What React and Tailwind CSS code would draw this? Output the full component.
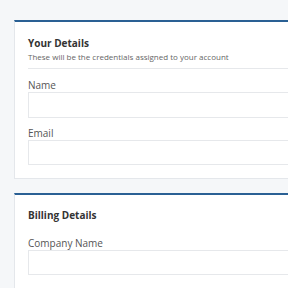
export default function App() {
  const font = { fontFamily: '"Open Sans", "Liberation Sans", sans-serif' };
  return (
    <div className="w-[288px] h-[288px] overflow-hidden bg-[#f5f7f9] pt-[20px] pl-[14px]" style={font}>
      <div className="w-[320px] flex flex-col gap-[14px]">
        <div className="bg-white border-t-2 border-t-[#2a6094] border-l border-b border-[#e4e7eb] px-[13px] pt-[13px] pb-[13px]">
          <div className="text-[10px] leading-[16px] font-bold text-[#333]">Your Details</div>
          <div className="text-[8px] leading-[10px] text-[#666] mt-[1px]">These will be the credentials assigned to your account</div>
          <div className="border-t border-[#e6e8eb] mt-[6px]" />
          <div className="text-[10px] leading-[13px] text-[#555] mt-[10px]">Name</div>
          <div className="h-[26px] border border-[#e6e8eb]" />
          <div className="text-[10px] leading-[13px] text-[#555] mt-[9px]">Email</div>
          <div className="h-[25px] border border-[#e6e8eb]" />
        </div>
        <div className="bg-white border-t-2 border-t-[#2a6094] border-l border-[#e4e7eb] px-[13px] pt-[12px] pb-[13px]">
          <div className="text-[10px] leading-[16px] font-bold text-[#333]">Billing Details</div>
          <div className="text-[10px] leading-[13px] text-[#555] mt-[14px]">Company Name</div>
          <div className="h-[25px] border border-[#e6e8eb]" />
        </div>
      </div>
    </div>
  );
}
